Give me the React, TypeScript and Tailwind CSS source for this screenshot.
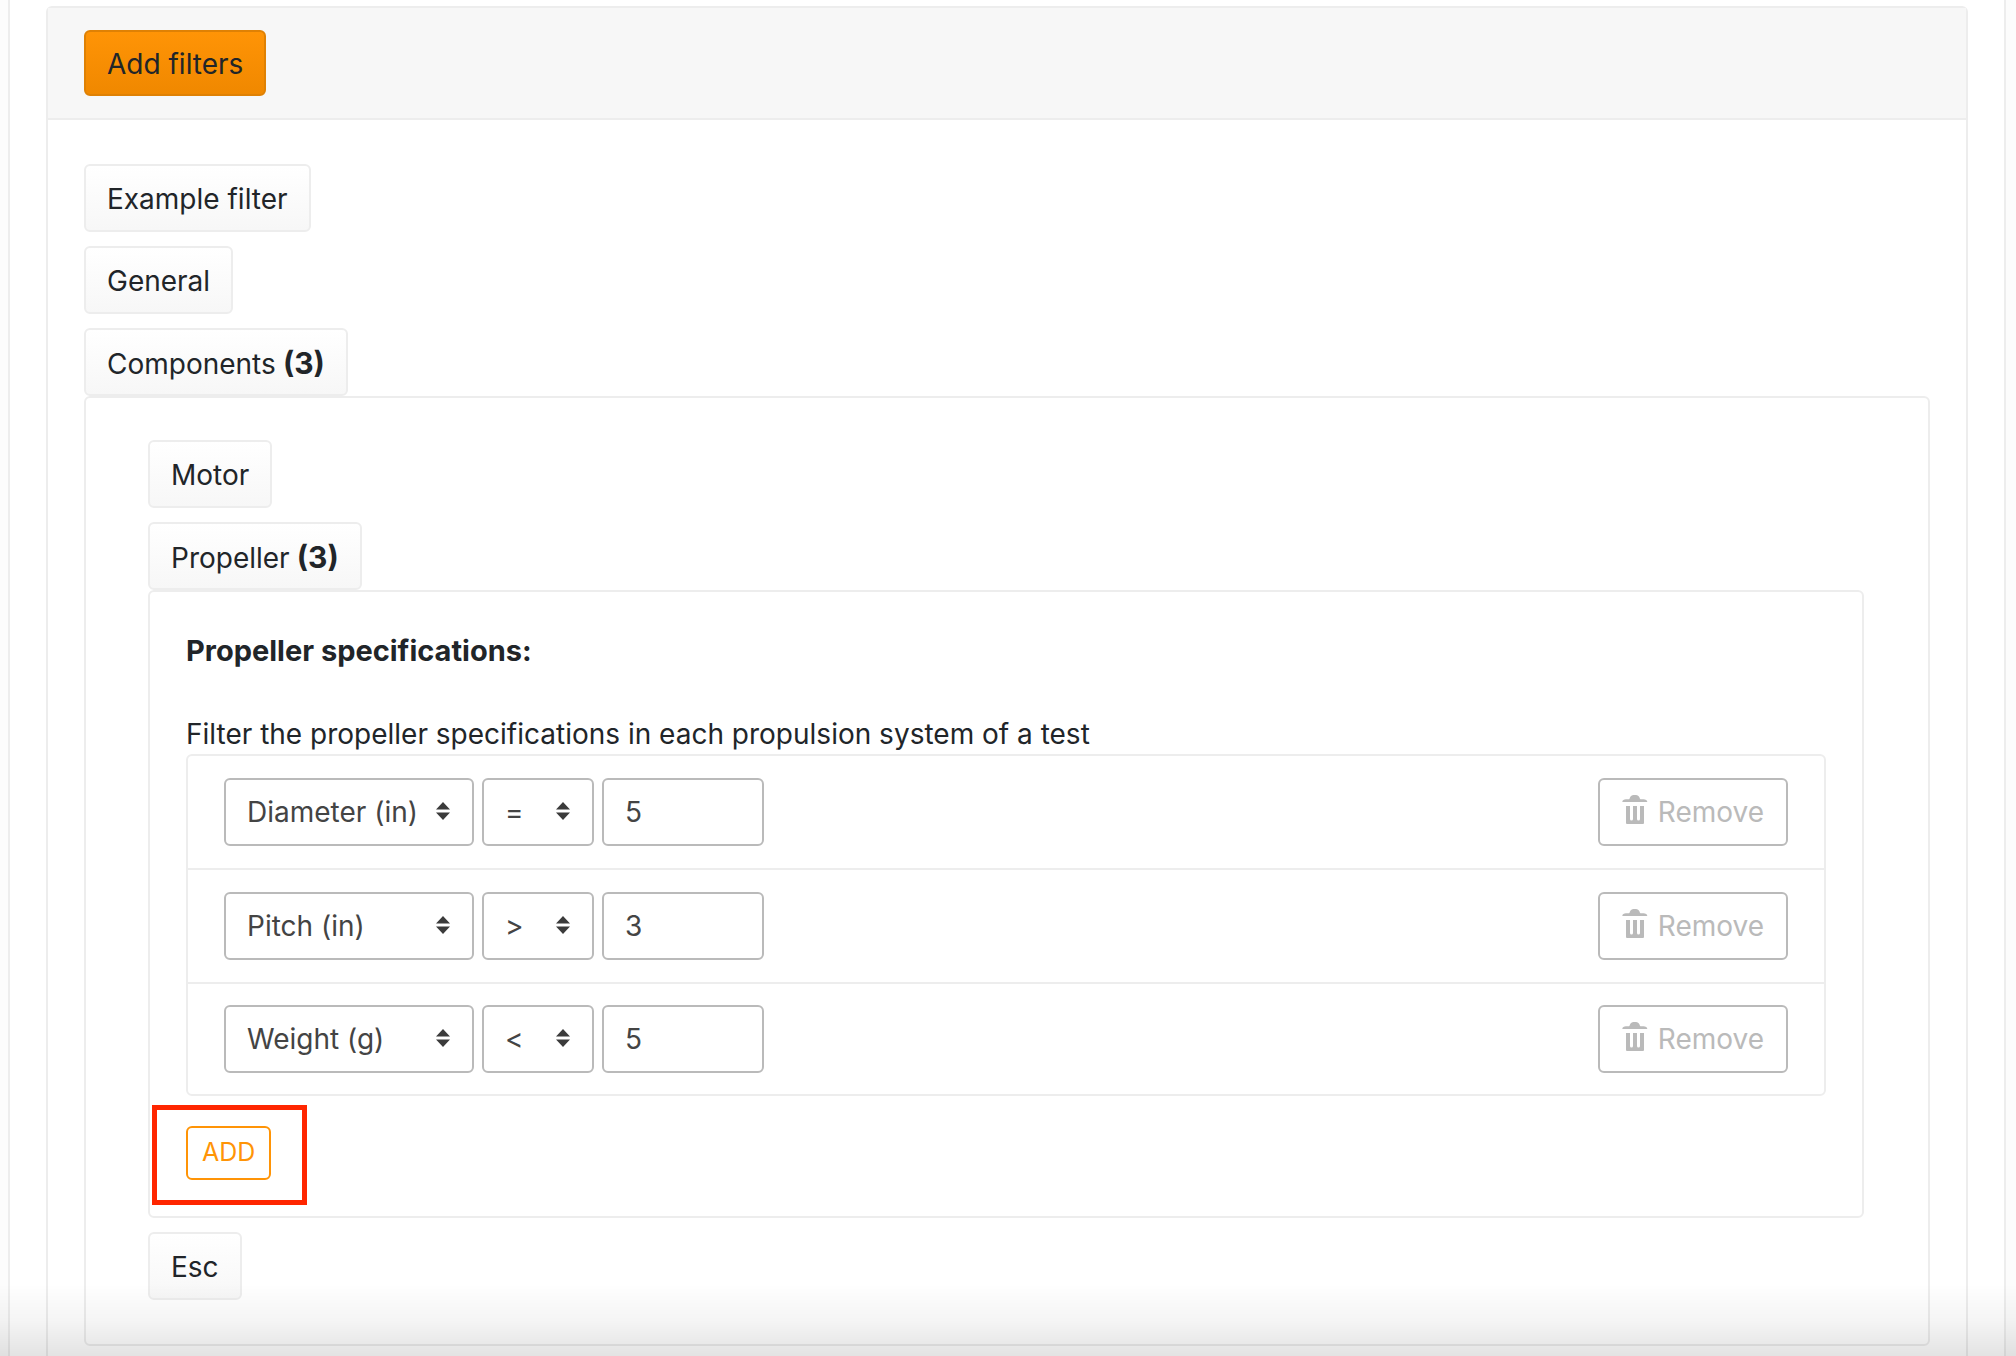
import { useState } from "react";

type Filter = {
  id: number;
  field: string;
  operator: string;
  value: string;
};

const FIELDS = ["Diameter (in)", "Pitch (in)", "Weight (g)"];
const OPERATORS = ["=", ">", "<"];

const INITIAL_FILTERS: Filter[] = [
  { id: 1, field: "Diameter (in)", operator: "=", value: "5" },
  { id: 2, field: "Pitch (in)", operator: ">", value: "3" },
  { id: 3, field: "Weight (g)", operator: "<", value: "5" },
];

function TrashIcon() {
  return (
    <svg width="26" height="34" viewBox="0 0 26 34" fill="currentColor" aria-hidden="true">
      <path d="M0.300 7C0.300 5.200 2 4.300 4 4.300H6.500C7.600 4.300 7.600 3.500 8 2.500C8.600 0.900 10 0 11.500 0H14C15.500 0 16.900 0.900 17.500 2.500C17.900 3.500 18 4.300 19 4.300H21.500C23.500 4.300 25.300 5.200 25.300 7Z" />
      <path d="M4 11H8V24a1.500 1.500 0 0 0 3 0V11H15V24a1.500 1.500 0 0 0 3 0V11H22V28a1 1 0 0 1-1 1H5a1 1 0 0 1-1-1Z" />
    </svg>
  );
}

function FilterButton({ label, count }: { label: string; count?: number }) {
  return (
    <button
      type="button"
      className="h-[68px] rounded-md border-2 border-[#ededed] bg-linear-to-b from-white to-[#f7f7f7] px-[21px] pt-[2px] whitespace-nowrap"
    >
      {label}
      {count !== undefined && <strong className="text-[30px] font-bold"> ({count})</strong>}
    </button>
  );
}

function Select({
  label,
  value,
  options,
  className,
  onChange,
}: {
  label: string;
  value: string;
  options: string[];
  className: string;
  onChange: (value: string) => void;
}) {
  return (
    <div className={`relative ${className}`}>
      <select
        aria-label={label}
        value={value}
        onChange={(e) => onChange(e.target.value)}
        className="h-[68px] w-full appearance-none rounded-md border-2 border-[#bababa] bg-white pl-[21px] text-[#444]"
      >
        {options.map((option) => (
          <option key={option}>{option}</option>
        ))}
      </select>
      <svg
        width="14"
        height="18"
        viewBox="0 0 14 18"
        className="pointer-events-none absolute top-6 right-6 fill-[#3b3b3b]"
        aria-hidden="true"
      >
        <path d="M7 0L14 7.500H0ZM0 10.500H14L7 18Z" />
      </svg>
    </div>
  );
}

export default function App() {
  const [filters, setFilters] = useState(INITIAL_FILTERS);

  const updateFilter = (id: number, changes: Partial<Filter>) => {
    setFilters((prev) => prev.map((f) => (f.id === id ? { ...f, ...changes } : f)));
  };

  const removeFilter = (id: number) => {
    setFilters((prev) => prev.filter((f) => f.id !== id));
  };

  const addFilter = () => {
    setFilters((prev) => [
      ...prev,
      { id: Date.now(), field: FIELDS[0], operator: OPERATORS[0], value: "" },
    ]);
  };

  return (
    <div className="h-screen overflow-hidden bg-[#fcfcfc] pr-[10px] pl-2 font-['Inter',sans-serif] text-[28px] leading-[42px] text-[#212529]">
      <main className="min-h-full border-x-2 border-[#ededed] bg-white px-9 pt-[6px]">
        <section className="rounded-md border-2 border-[#ededed]">
          <header className="border-b-2 border-[#ededed] bg-[#f7f7f7] px-9 py-[22px]">
            <button
              type="button"
              className="h-[66px] rounded-md border-2 border-[#df8104] bg-linear-to-b from-[#ff9406] to-[#f08800] px-[21px] pt-[2px]"
            >
              Add filters
            </button>
          </header>

          <div className="flex flex-col items-start gap-[14px] px-9 pt-11 pb-9">
            <FilterButton label="Example filter" />
            <FilterButton label="General" />

            <div className="w-full">
              <FilterButton label="Components" count={3} />
              <div className="flex flex-col items-start gap-[14px] rounded-md border-2 border-[#ededed] pt-[42px] pr-16 pb-11 pl-[62px]">
                <FilterButton label="Motor" />

                <div className="w-full">
                  <FilterButton label="Propeller" count={3} />
                  <div className="rounded-md border-2 border-[#ededed] px-9 pt-[38px] pb-9">
                    <h2 className="text-[29px] font-bold">Propeller specifications:</h2>
                    <p className="mt-[42px] leading-10">
                      Filter the propeller specifications in each propulsion system of a test
                    </p>

                    <ul className="divide-y-2 divide-[#ededed] rounded-md border-2 border-[#ededed]">
                      {filters.map((filter) => (
                        <li key={filter.id} className="flex items-center gap-2 px-9 py-[22px] last:py-[21px]">
                          <Select
                            label="Specification"
                            className="w-[250px]"
                            value={filter.field}
                            options={FIELDS}
                            onChange={(field) => updateFilter(filter.id, { field })}
                          />
                          <Select
                            label="Operator"
                            className="w-28"
                            value={filter.operator}
                            options={OPERATORS}
                            onChange={(operator) => updateFilter(filter.id, { operator })}
                          />
                          <input
                            type="text"
                            aria-label="Value"
                            value={filter.value}
                            onChange={(e) => updateFilter(filter.id, { value: e.target.value })}
                            className="h-[68px] w-[162px] rounded-md border-2 border-[#bababa] px-[21px] text-[#444]"
                          />
                          <button
                            type="button"
                            onClick={() => removeFilter(filter.id)}
                            className="ml-auto flex h-[68px] items-center gap-[10px] rounded-md border-2 border-[#bababa] px-[22px] text-[#bababa]"
                          >
                            <TrashIcon />
                            Remove
                          </button>
                        </li>
                      ))}
                    </ul>

                    <div className="relative mt-[30px] w-fit">
                      <button
                        type="button"
                        onClick={addFilter}
                        className="block h-[54px] rounded-md border-2 border-[#ff9406] px-[14px] pb-[2px] text-[25px] text-[#ff9406]"
                      >
                        ADD
                      </button>
                      {/* Highlight around the add action */}
                      <div className="pointer-events-none absolute -top-[21px] -right-9 -bottom-[25px] -left-[34px] border-5 border-[#ff2600]" />
                    </div>
                  </div>
                </div>

                <FilterButton label="Esc" />
              </div>
            </div>
          </div>
        </section>
      </main>

      <div className="pointer-events-none fixed inset-x-0 bottom-0 h-[72px] bg-linear-to-b from-transparent via-black/4 to-black/11" />
    </div>
  );
}
